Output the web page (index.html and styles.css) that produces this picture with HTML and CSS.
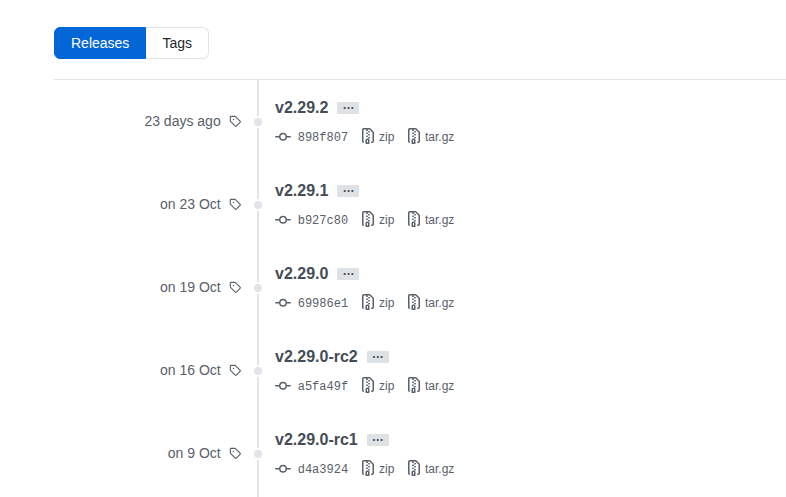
FILE: index.html
```
<!DOCTYPE html>
<html lang="en">
<head>
<meta charset="utf-8">
<title>Tags</title>
<link rel="stylesheet" href="styles.css">
</head>
<body>
<svg class="sprite" aria-hidden="true">
  <symbol id="tag" viewBox="0 0 16 16"><path fill-rule="evenodd" d="M2.5 7.775V2.75a.25.25 0 01.25-.25h5.025a.25.25 0 01.177.073l6.25 6.25a.25.25 0 010 .354l-5.025 5.025a.25.25 0 01-.354 0l-6.25-6.25a.25.25 0 01-.073-.177zm-1.5 0V2.75C1 1.784 1.784 1 2.75 1h5.025c.464 0 .91.184 1.238.513l6.25 6.25a1.75 1.75 0 010 2.474l-5.026 5.026a1.75 1.75 0 01-2.474 0l-6.25-6.25A1.75 1.75 0 011 7.775zM6 5a1 1 0 100 2 1 1 0 000-2z"/></symbol>
  <symbol id="commit" viewBox="0 0 16 16"><path fill-rule="evenodd" d="M10.5 7.75a2.5 2.5 0 11-5 0 2.5 2.5 0 015 0zm1.43.75a4.002 4.002 0 01-7.86 0H.75a.75.75 0 110-1.5h3.32a4.001 4.001 0 017.86 0h3.32a.75.75 0 110 1.5h-3.32z"/></symbol>
  <symbol id="archive" viewBox="0 0 16 16"><path fill-rule="evenodd" d="M3.5 1.75a.25.25 0 01.25-.25h3a.75.75 0 000 1.5h.5a.75.75 0 000-1.5h2.086a.25.25 0 01.177.073l2.914 2.914a.25.25 0 01.073.177v8.586a.25.25 0 01-.25.25h-.5a.75.75 0 000 1.5h.5A1.75 1.75 0 0014 13.25V4.664c0-.464-.184-.909-.513-1.237L10.573.513A1.75 1.75 0 009.336 0H3.75A1.75 1.75 0 002 1.75v11.5c0 .649.353 1.214.874 1.515a.75.75 0 10.752-1.298.25.25 0 01-.126-.217V1.75zM8.75 3a.75.75 0 000 1.5h.5a.75.75 0 000-1.5h-.5zM6 5.25a.75.75 0 01.75-.75h.5a.75.75 0 010 1.5h-.5A.75.75 0 016 5.25zm2 1.5A.75.75 0 018.75 6h.5a.75.75 0 010 1.5h-.5A.75.75 0 018 6.75zm-1.25.75a.75.75 0 000 1.5h.5a.75.75 0 000-1.5h-.5zM8 9.75A.75.75 0 018.75 9h.5a.75.75 0 010 1.5h-.5A.75.75 0 018 9.75zm-.75.75a1.75 1.75 0 00-1.75 1.75v3c0 .414.336.75.75.75h2.5a.75.75 0 00.75-.75v-3a1.75 1.75 0 00-1.75-1.75h-.5zM7 12.25a.25.25 0 01.25-.25h.5a.25.25 0 01.25.25v2.25H7v-2.25z"/></symbol>
</svg>
<nav class="subnav">
  <a class="subnav-item selected">Releases</a><a class="subnav-item">Tags</a>
</nav>
<main class="timeline">
  <section class="release">
    <div class="date">23 days ago<svg class="tag-icon"><use href="#tag"/></svg></div>
    <div class="body">
      <h4 class="title">v2.29.2<span class="expander">…</span></h4>
      <ul class="links">
        <li class="sha"><svg class="icon"><use href="#commit"/></svg>898f807</li>
        <li class="zip"><svg class="icon"><use href="#archive"/></svg>zip</li>
        <li><svg class="icon"><use href="#archive"/></svg>tar.gz</li>
      </ul>
    </div>
  </section>
  <section class="release">
    <div class="date">on 23 Oct<svg class="tag-icon"><use href="#tag"/></svg></div>
    <div class="body">
      <h4 class="title">v2.29.1<span class="expander">…</span></h4>
      <ul class="links">
        <li class="sha"><svg class="icon"><use href="#commit"/></svg>b927c80</li>
        <li class="zip"><svg class="icon"><use href="#archive"/></svg>zip</li>
        <li><svg class="icon"><use href="#archive"/></svg>tar.gz</li>
      </ul>
    </div>
  </section>
  <section class="release">
    <div class="date">on 19 Oct<svg class="tag-icon"><use href="#tag"/></svg></div>
    <div class="body">
      <h4 class="title">v2.29.0<span class="expander">…</span></h4>
      <ul class="links">
        <li class="sha"><svg class="icon"><use href="#commit"/></svg>69986e1</li>
        <li class="zip"><svg class="icon"><use href="#archive"/></svg>zip</li>
        <li><svg class="icon"><use href="#archive"/></svg>tar.gz</li>
      </ul>
    </div>
  </section>
  <section class="release">
    <div class="date">on 16 Oct<svg class="tag-icon"><use href="#tag"/></svg></div>
    <div class="body">
      <h4 class="title">v2.29.0-rc2<span class="expander">…</span></h4>
      <ul class="links">
        <li class="sha"><svg class="icon"><use href="#commit"/></svg>a5fa49f</li>
        <li class="zip"><svg class="icon"><use href="#archive"/></svg>zip</li>
        <li><svg class="icon"><use href="#archive"/></svg>tar.gz</li>
      </ul>
    </div>
  </section>
  <section class="release">
    <div class="date">on 9 Oct<svg class="tag-icon"><use href="#tag"/></svg></div>
    <div class="body">
      <h4 class="title">v2.29.0-rc1<span class="expander">…</span></h4>
      <ul class="links">
        <li class="sha"><svg class="icon"><use href="#commit"/></svg>d4a3924</li>
        <li class="zip"><svg class="icon"><use href="#archive"/></svg>zip</li>
        <li><svg class="icon"><use href="#archive"/></svg>tar.gz</li>
      </ul>
    </div>
  </section>
</main>
</body>
</html>
```
FILE: styles.css
```
*, *::before { box-sizing: border-box; }
body {
  margin: 0;
  padding: 27px 0 0 54px;
  height: 497px;
  overflow: hidden;
  background: #fff;
  color: #24292e;
  font: 14px/20px "Liberation Sans", Arial, sans-serif;
}
.sprite { position: absolute; width: 0; height: 0; }
svg { fill: currentColor; flex: none; }
.subnav { display: flex; height: 32px; margin-bottom: 20px; }
.subnav-item {
  padding: 5px 16px;
  border: 1px solid #e1e4e8;
  border-left: 0;
  border-radius: 0 6px 6px 0;
}
.subnav-item.selected {
  border: 1px solid #0366d6;
  border-radius: 6px 0 0 6px;
  background: #0366d6;
  color: #fff;
}
.timeline { border-top: 1px solid #e1e4e8; }
.release { display: flex; height: 83px; }
.release:last-child { height: 86px; }
.date {
  display: flex;
  align-items: flex-start;
  justify-content: flex-end;
  width: 203px;
  padding: 31px 16px 0 0;
  color: #586069;
}
.tag-icon { width: 12px; height: 12px; margin: 4px 0 0 8.3px; }
.body {
  position: relative;
  flex: 1;
  padding: 16px 0 0 16px;
  border-left: 2px solid #e1e4e8;
}
.body::before {
  content: "";
  position: absolute;
  left: -7px;
  top: 36px;
  width: 12px;
  height: 12px;
  border: 2px solid #fff;
  border-radius: 50%;
  background: #e1e4e8;
}
.title {
  display: flex;
  align-items: center;
  height: 24px;
  margin: 0;
  color: #444d56;
  font-size: 16px;
  line-height: 24px;
}
.expander {
  height: 12px;
  margin: -1px 0 0 9px;
  padding: 0 5px;
  border-radius: 1px;
  background: #dfe2e5;
  font-size: 12px;
  line-height: 6px;
}
.links {
  display: flex;
  height: 18px;
  margin: 8px 0 0;
  padding: 0;
  list-style: none;
  color: #586069;
  font-size: 12px;
  line-height: 18px;
}
.links li { display: flex; }
.icon { width: 16px; height: 16px; margin-right: 3px; }
.sha { width: 85px; font-family: "Liberation Mono", monospace; line-height: 20px; }
.sha .icon { margin: 1px 6.7px 0 0; }
.zip { width: 46px; }
```
